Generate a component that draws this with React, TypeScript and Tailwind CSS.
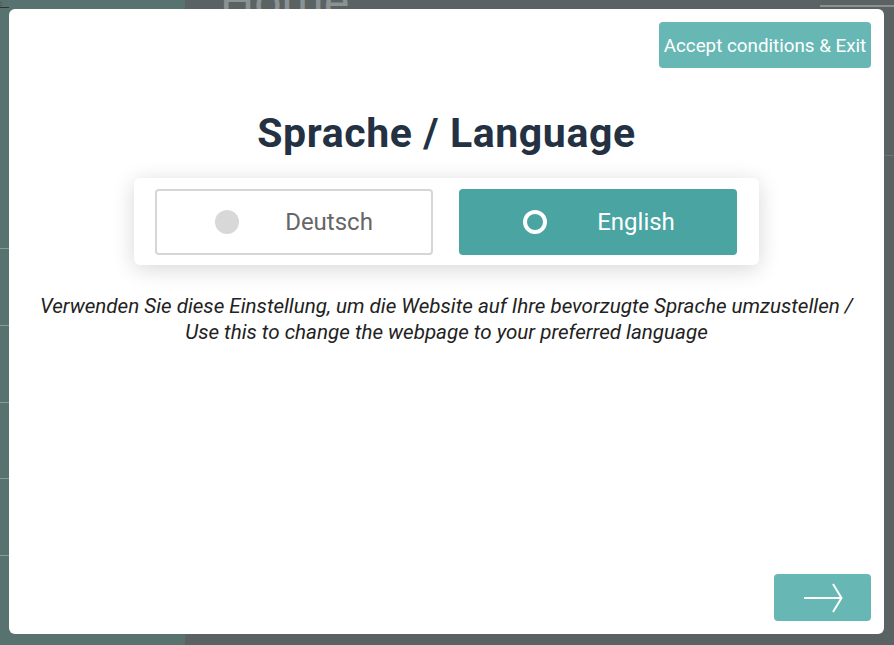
import React from "react";

export default function App() {
  const font = { fontFamily: "Roboto, 'Noto Sans', sans-serif" };
  return (
    <div className="relative w-[894px] h-[645px] overflow-hidden bg-[#5a6264]" style={font}>
      {/* background page */}
      <div className="absolute left-0 top-0 w-[185px] h-full bg-[#587270]">
        <div className="absolute left-0 top-0 w-[9px] h-[8px] border-b border-[#333] text-[8px] leading-none text-[#333]">⁝</div>
        <div className="absolute left-0 top-[248px] w-full h-px bg-[#8a9b99]" />
        <div className="absolute left-0 top-[325px] w-full h-px bg-[#8a9b99]" />
        <div className="absolute left-0 top-[402px] w-full h-px bg-[#8a9b99]" />
        <div className="absolute left-0 top-[478px] w-full h-px bg-[#8a9b99]" />
        <div className="absolute left-0 top-[555px] w-full h-px bg-[#8a9b99]" />
      </div>
      <div className="absolute left-[220px] top-[-22px] text-[48px] leading-none text-[#8c9192]">Home</div>
      <div className="absolute left-[820px] top-[5px] w-[74px] h-[2px] bg-[#8c9192]" />
      <div className="absolute left-[884px] top-[155px] w-[10px] h-px bg-[#6d7577]" />

      {/* modal */}
      <div className="absolute left-[9px] top-[9px] w-[875px] h-[625px] bg-white rounded-[6px] flex flex-col">
        <div className="flex justify-end pt-[13px] pr-[13px]">
          <button className="h-[46px] w-[212px] pt-[3px] rounded-[4px] bg-[#67b8b5] text-white text-[18.8px]">
            Accept conditions &amp; Exit
          </button>
        </div>
        <h1 className="mt-[40px] text-center text-[41px] leading-[50px] font-bold text-[#233142] tracking-[0.6px]">
          Sprache / Language
        </h1>
        <div className="mt-[20px] mx-auto w-[625px] h-[87px] bg-white rounded-[6px] shadow-[0_4px_22px_rgba(0,0,0,0.16)] flex items-center gap-[26px] px-[21px]">
          <button className="flex items-center w-[278px] h-[66px] border-2 border-[#d6d6d6] rounded-[4px] bg-white">
            <span className="ml-[58px] w-[24px] h-[24px] rounded-full bg-[#d8d8d8]" />
            <span className="flex-1 text-center pr-[12px] text-[24px] text-[#666]">Deutsch</span>
          </button>
          <button className="flex items-center w-[278px] h-[66px] rounded-[4px] bg-[#4aa5a2]">
            <span className="ml-[64px] w-[24px] h-[24px] rounded-full border-[4px] border-white" />
            <span className="flex-1 text-center pr-[12px] text-[24px] text-white">English</span>
          </button>
        </div>
        <p className="mt-[28px] text-center italic text-[20.6px] leading-[26px] text-[#222]">
          Verwenden Sie diese Einstellung, um die Website auf Ihre bevorzugte Sprache umzustellen /<br />
          Use this to change the webpage to your preferred language
        </p>
        <div className="mt-auto flex justify-end pb-[13px] pr-[13px]">
          <button className="w-[97px] h-[47px] rounded-[4px] bg-[#67b8b5] flex items-center justify-center">
            <svg width="40" height="32" viewBox="0 0 40 32" fill="none" stroke="white" strokeWidth="2">
              <path d="M1 16h37" />
              <path d="M30 2l8.5 14-8.5 14" />
            </svg>
          </button>
        </div>
      </div>
    </div>
  );
}
